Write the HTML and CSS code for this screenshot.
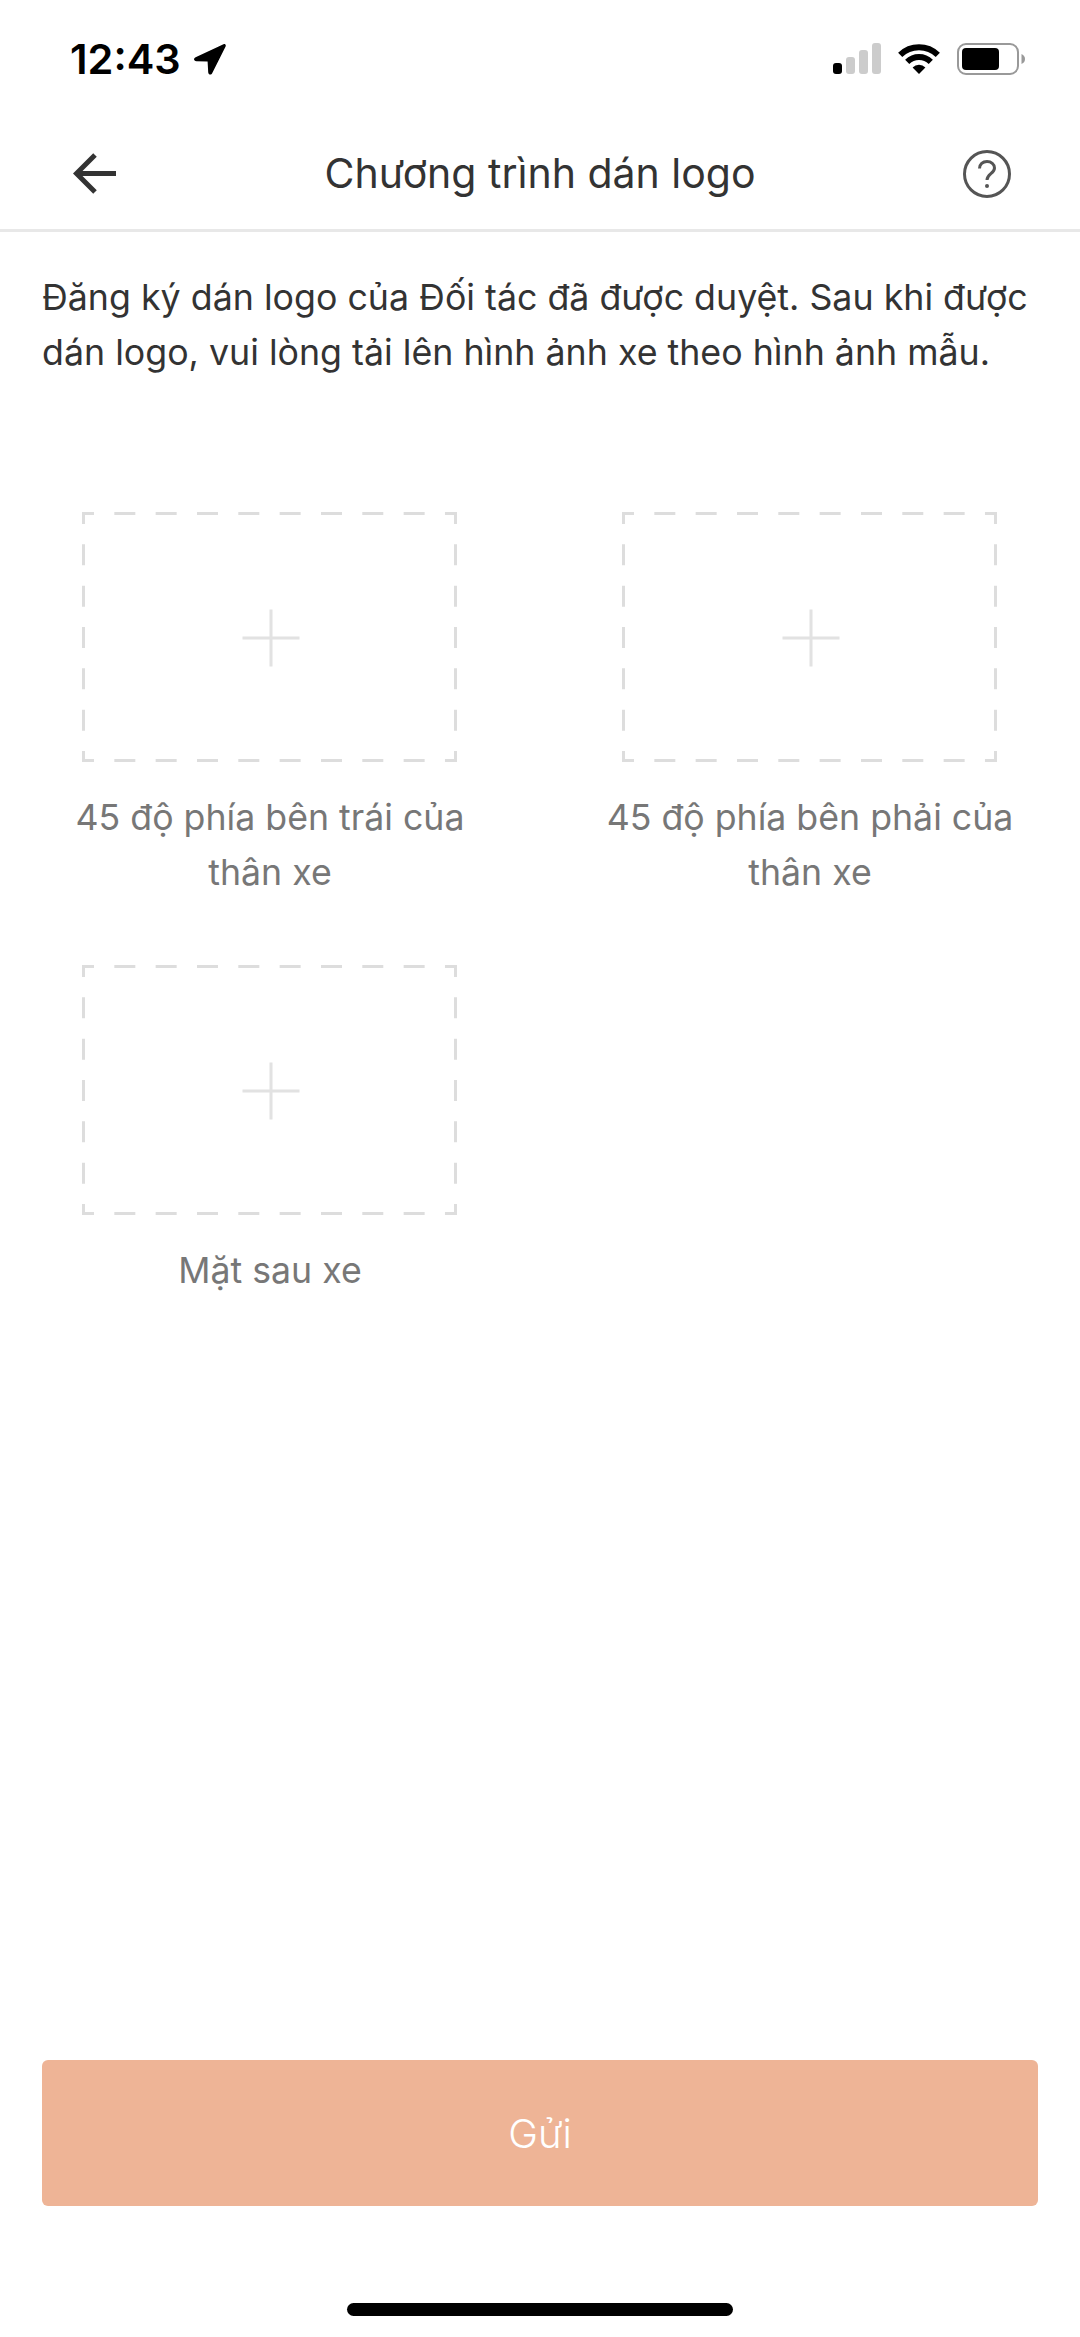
FILE: index.html
```html
<!DOCTYPE html>
<html lang="vi">
<head>
<meta charset="utf-8">
<title>Chương trình dán logo</title>
<link rel="stylesheet" href="styles.css">
</head>
<body>
<main class="page">
  <div class="status">
    <div class="status-left">
      <span class="time">12:43</span>
      <svg class="loc" viewBox="0 0 33 32"><path d="M30.5 1.2 2.6 14.2c-2.5 1.2-1.8 4 .8 4.1l11.2.3.6 10.6c.2 2.6 3 3.2 4.1.8L32.6 3.4c.7-1.6-.6-2.9-2.1-2.2Z"/></svg>
    </div>
    <div class="status-right">
      <svg class="signal" viewBox="0 0 48 31">
        <rect class="on" x="0" y="20" width="9" height="11" rx="3"/>
        <rect class="off" x="13" y="14" width="9" height="17" rx="3"/>
        <rect class="off" x="26" y="7" width="9" height="24" rx="3"/>
        <rect class="off" x="39" y="0" width="9" height="31" rx="3"/>
      </svg>
      <svg class="wifi" viewBox="0 0 42 31">
        <path class="arc" d="M2.2 11.8a27 27 0 0 1 37.6 0"/>
        <path class="arc" d="M9.2 18.8a17 17 0 0 1 23.6 0"/>
        <path class="dot" d="M14.6 24.4a9 9 0 0 1 12.8 0L21 31Z"/>
      </svg>
      <svg class="battery" viewBox="0 0 69 32">
        <rect class="shell" x="1" y="1" width="60" height="30" rx="8"/>
        <rect class="level" x="5" y="5" width="37" height="22" rx="4"/>
        <path class="nub" d="M64.500 11c2.500 1 3.500 3 3.500 5s-1 4-3.500 5Z"/>
      </svg>
    </div>
  </div>

  <header class="nav">
    <svg class="back" viewBox="0 0 44 42"><path d="M43 20.500H4M22 2 3.500 20.500 22 39"/></svg>
    <h1 class="title">Chương trình dán logo</h1>
    <svg class="help" viewBox="0 0 48 48">
      <circle cx="24" cy="24" r="22.500"/>
      <path d="M16.500 18.500c0-4.200 3.300-7 7.500-7s7.500 2.700 7.500 6.500c0 5.500-7.500 6-7.500 12"/>
      <circle class="help-dot" cx="24" cy="36" r="2"/>
    </svg>
  </header>

  <p class="intro">Đăng ký dán logo của Đối tác đã được duyệt. Sau khi được dán logo, vui lòng tải lên hình ảnh xe theo hình ảnh mẫu.</p>

  <section class="uploads">
    <div class="upload">
      <svg class="drop" viewBox="0 0 375 250">
        <line x1="0" y1="1.500" x2="375" y2="1.500"/><line x1="0" y1="248.500" x2="375" y2="248.500"/>
        <line x1="1.500" y1="0" x2="1.500" y2="250"/><line x1="373.500" y1="0" x2="373.500" y2="250"/>
        <path class="plus" d="M160.500 126h57M189 97.500v57"/>
      </svg>
      <p class="label">45 độ phía bên trái của thân xe</p>
    </div>
    <div class="upload">
      <svg class="drop" viewBox="0 0 375 250">
        <line x1="0" y1="1.500" x2="375" y2="1.500"/><line x1="0" y1="248.500" x2="375" y2="248.500"/>
        <line x1="1.500" y1="0" x2="1.500" y2="250"/><line x1="373.500" y1="0" x2="373.500" y2="250"/>
        <path class="plus" d="M160.500 126h57M189 97.500v57"/>
      </svg>
      <p class="label">45 độ phía bên phải của thân xe</p>
    </div>
    <div class="upload">
      <svg class="drop" viewBox="0 0 375 250">
        <line x1="0" y1="1.500" x2="375" y2="1.500"/><line x1="0" y1="248.500" x2="375" y2="248.500"/>
        <line x1="1.500" y1="0" x2="1.500" y2="250"/><line x1="373.500" y1="0" x2="373.500" y2="250"/>
        <path class="plus" d="M160.500 126h57M189 97.500v57"/>
      </svg>
      <p class="label">Mặt sau xe</p>
    </div>
  </section>

  <div class="footer">
    <button class="submit" type="button">Gửi</button>
    <div class="home"></div>
  </div>
</main>
</body>
</html>
```

FILE: styles.css
```css
* { box-sizing: border-box; }
html, body { margin: 0; padding: 0; background: #fff; }
body { font-family: Inter, "Noto Sans", sans-serif; color: #333; }

.page {
  width: 1080px;
  height: 2337px;
  display: flex;
  flex-direction: column;
  overflow: hidden;
}

/* status bar */
.status {
  height: 118px;
  padding: 43px 54px 0 70px;
  display: flex;
  justify-content: space-between;
  align-items: flex-start;
}
.status-left { display: flex; align-items: center; gap: 12px; }
.time {
  font-size: 41.500px;
  line-height: 32px;
  font-weight: 600;
  color: #000;
}
.loc { width: 33px; height: 32px; fill: #000; }
.status-right { display: flex; gap: 17px; }
.signal { width: 48px; height: 31px; }
.signal .on { fill: #000; }
.signal .off { fill: #ccc; }
.wifi { width: 42px; height: 31px; }
.wifi .arc { fill: none; stroke: #000; stroke-width: 6; }
.wifi .dot { fill: #000; }
.battery { width: 69px; height: 32px; }
.battery .shell { fill: none; stroke: #999; stroke-width: 2; }
.battery .level { fill: #000; }
.battery .nub { fill: #999; }

/* navigation */
.nav {
  height: 114px;
  border-bottom: 3px solid #e8e8e8;
  padding: 0 69px 0 73px;
  display: flex;
  align-items: center;
  justify-content: space-between;
}
.back { width: 44px; height: 42px; fill: none; stroke: #333; stroke-width: 5; }
.title {
  margin: -2px 0 0;
  font-size: 41px;
  line-height: 56px;
  font-weight: 400;
  color: #333;
}
.help { width: 48px; height: 48px; fill: none; stroke: #555; stroke-width: 3; }
.help .help-dot { fill: #555; stroke: none; }

/* intro */
.intro {
  margin: 0;
  padding: 38px 42px 0;
  font-size: 35.750px;
  line-height: 55px;
  color: #333;
}

/* upload grid */
.uploads {
  margin-top: 132px;
  display: grid;
  grid-template-columns: 540px 540px;
  row-gap: 65px;
  align-items: start;
}
.upload {
  display: flex;
  flex-direction: column;
  align-items: center;
}
.drop { width: 375px; height: 250px; margin-right: 2px; }
.drop line { stroke: #ddd; stroke-width: 3; stroke-dasharray: 21 20.330; stroke-dashoffset: 9; }
.plus { fill: none; stroke: #e2e2e2; stroke-width: 3; }
.label {
  margin: 28px 0 0;
  width: 430px;
  font-size: 35.700px;
  line-height: 55px;
  text-align: center;
  color: #777;
}

/* footer */
.footer {
  margin-top: auto;
  padding: 0 42px 21px;
  display: flex;
  flex-direction: column;
  align-items: center;
}
.submit {
  width: 996px;
  height: 146px;
  border: 0;
  border-radius: 6px;
  background: #eeb496;
  color: #fff;
  font-family: inherit;
  font-size: 40px;
  font-weight: 300;
}
.home {
  margin-top: 97px;
  width: 386px;
  height: 13px;
  border-radius: 7px;
  background: #000;
}
```
